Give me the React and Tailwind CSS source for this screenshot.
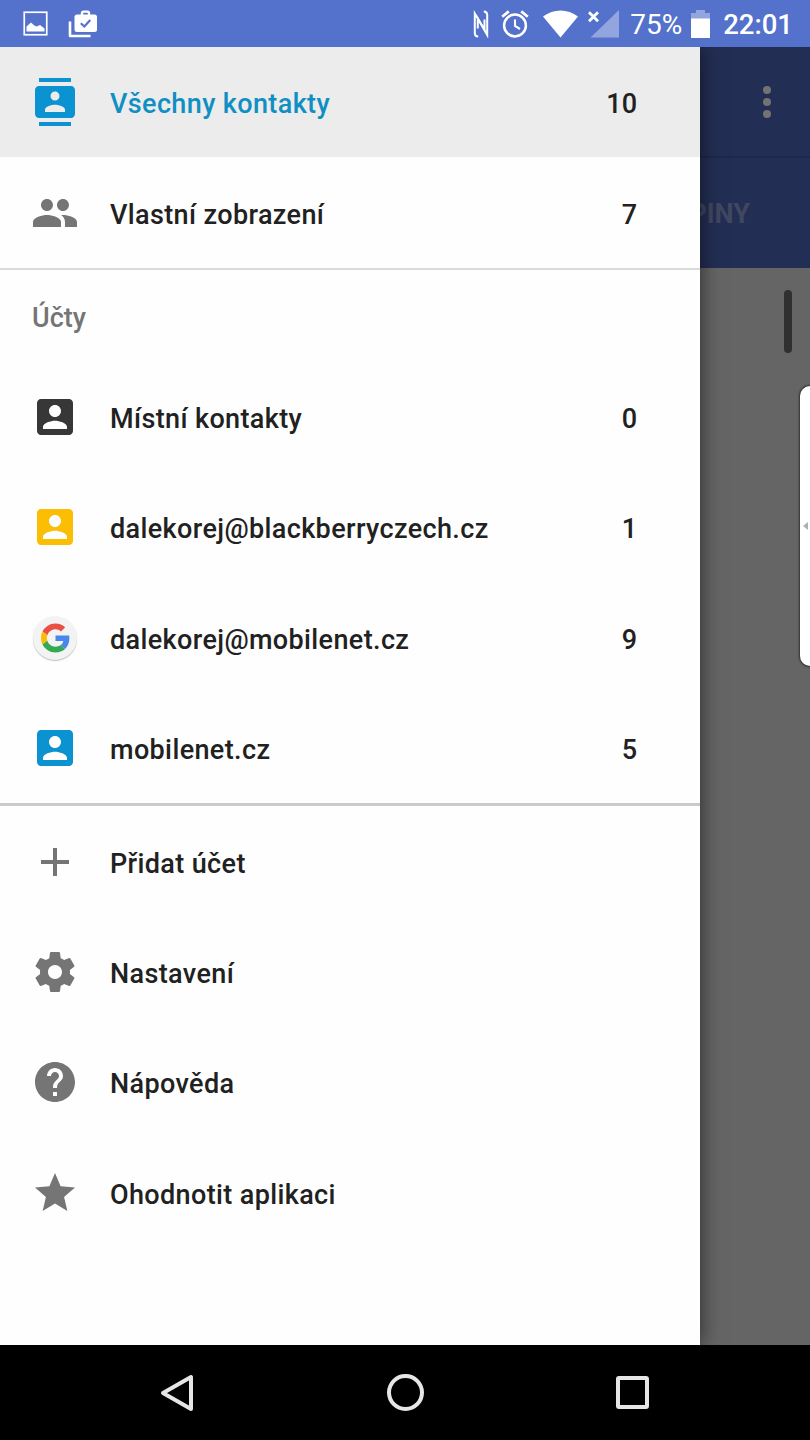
import { MdAdd, MdHelp, MdStar } from "react-icons/md";

// Material icons on a 24 unit grid
const ContactsIcon = () => (
  <svg className="w-12 h-12" viewBox="0 0 24 24" fill="currentColor">
    <path d="M20 0H4v2h16V0zM4 24h16v-2H4v2zM20 4H4c-1.1 0-2 .9-2 2v12c0 1.1.9 2 2 2h16c1.1 0 2-.9 2-2V6c0-1.1-.9-2-2-2zm-8 2.75c1.24 0 2.25 1.01 2.25 2.25s-1.01 2.25-2.25 2.25S9.75 10.24 9.75 9 10.76 6.75 12 6.75zM17 17H7v-1.1c0-1.67 3.33-2.5 5-2.5s5 .83 5 2.5V17z" />
  </svg>
);

const PeopleIcon = () => (
  <svg className="w-12 h-12" viewBox="0 0 24 24" fill="currentColor">
    <path d="M16 11c1.66 0 2.99-1.34 2.99-3S17.66 5 16 5c-1.66 0-3 1.34-3 3s1.34 3 3 3zm-8 0c1.66 0 2.99-1.34 2.99-3S9.66 5 8 5C6.34 5 5 6.34 5 8s1.34 3 3 3zm0 2c-2.33 0-7 1.17-7 3.5V19h14v-2.5c0-2.33-4.67-3.5-7-3.5zm8 0c-.29 0-.62.02-.97.05 1.16.84 1.97 1.97 1.97 3.45V19h6v-2.5c0-2.33-4.67-3.5-7-3.5z" />
  </svg>
);

const AccountIcon = () => (
  <svg className="w-12 h-12" viewBox="0 0 24 24" fill="currentColor">
    <path d="M3 5v14c0 1.1.9 2 2 2h14c1.1 0 2-.9 2-2V5c0-1.1-.9-2-2-2H5c-1.1 0-2 .9-2 2zm12 4c0 1.66-1.34 3-3 3s-3-1.34-3-3 1.34-3 3-3 3 1.34 3 3zm-9 8c0-2 4-3.1 6-3.1s6 1.1 6 3.1v1H6v-1z" />
  </svg>
);

const SettingsIcon = () => (
  <svg className="w-12 h-12" viewBox="0 0 24 24" fill="currentColor">
    <path d="M19.43 12.98c.04-.32.07-.64.07-.98s-.03-.66-.07-.98l2.11-1.65c.19-.15.24-.42.12-.64l-2-3.46c-.12-.22-.39-.3-.61-.22l-2.49 1c-.52-.4-1.08-.73-1.69-.98l-.38-2.65C14.46 2.18 14.25 2 14 2h-4c-.25 0-.46.18-.49.42l-.38 2.65c-.61.25-1.17.59-1.69.98l-2.49-1c-.23-.09-.49 0-.61.22l-2 3.46c-.13.22-.07.49.12.64l2.11 1.65c-.04.32-.07.65-.07.98s.03.66.07.98l-2.11 1.65c-.19.15-.24.42-.12.64l2 3.46c.12.22.39.3.61.22l2.49-1c.52.4 1.08.73 1.69.98l.38 2.65c.03.24.24.42.49.42h4c.25 0 .46-.18.49-.42l.38-2.65c.61-.25 1.17-.59 1.69-.98l2.49 1c.23.09.49 0 .61-.22l2-3.46c.12-.22.07-.49-.12-.64l-2.11-1.65zM12 15.5c-1.93 0-3.5-1.57-3.5-3.5s1.57-3.5 3.5-3.5 3.5 1.57 3.5 3.5-1.57 3.5-3.5 3.5z" />
  </svg>
);

const GoogleIcon = () => (
  <div className="w-11 h-11 rounded-full bg-[#f3f3f3] shadow-[0_1px_1px_rgba(0,0,0,0.25)] flex items-center justify-center">
    <svg className="w-[29px] h-[30px]" viewBox="0 0 48 48">
      <path fill="#e94f42" d="M24 9.5c3.54 0 6.71 1.22 9.21 3.6l6.85-6.85C35.9 2.38 30.47 0 24 0 14.62 0 6.51 5.38 2.56 13.22l7.98 6.19C12.43 13.72 17.74 9.5 24 9.5z" />
      <path fill="#4a87ea" d="M46.98 24.55c0-1.57-.15-3.09-.38-4.55H24v9.02h12.94c-.58 2.96-2.26 5.48-4.78 7.18l7.73 6c4.51-4.18 7.09-10.36 7.09-17.65z" />
      <path fill="#fbbc05" d="M10.53 28.59c-.48-1.45-.76-2.99-.76-4.59s.27-3.14.76-4.59l-7.98-6.19C.92 16.46 0 20.12 0 24c0 3.88.92 7.54 2.56 10.78l7.97-6.19z" />
      <path fill="#34a853" d="M24 48c6.48 0 11.93-2.13 15.89-5.81l-7.73-6c-2.15 1.45-4.92 2.3-8.16 2.3-6.26 0-11.57-4.22-13.47-9.91l-7.98 6.19C6.51 42.62 14.62 48 24 48z" />
    </svg>
  </div>
);

// Status Bar Component
const StatusBar = () => {
  return (
    <header className="h-[47px] shrink-0 bg-[#5472cb] text-white flex items-center justify-between pl-[23px] pr-[17px]">
      <div className="flex items-center">
        <svg className="w-[25px] h-[25px]" viewBox="0 0 25 25">
          <rect x="1.250" y="1.250" width="22.500" height="22.500" fill="none" stroke="white" strokeWidth="1.700" />
          <path fill="white" d="M3.500 20.500v-5l4.500-4 3 2.700 2.500 1.300 3.500-1.500 4.500 3.500v3z" />
        </svg>
        <svg className="w-[29px] h-[28px] ml-5" viewBox="0 0 29 28">
          <path fill="none" stroke="white" strokeWidth="2.600" strokeLinejoin="round" d="M2 11.500V26h20.500" />
          <path fill="none" stroke="white" strokeWidth="2.400" d="M14 5V3.200Q14 1.600 15.500 1.600h4Q21 1.600 21 3.200V5" />
          <rect x="6.500" y="4.500" width="22.500" height="17.500" rx="2.500" fill="white" />
          <path fill="none" stroke="#5472cb" strokeWidth="2.200" d="M12.800 13.200l3.500 3.300 6-6.500" />
        </svg>
      </div>
      <div className="flex items-center">
        <svg className="w-4 h-7" viewBox="0 0 16 28" fill="none" stroke="white" strokeWidth="2">
          <path d="M5.200 26.500Q1.800 26.500 1.800 23V3.500L11.500 19.500V9.500" />
          <path d="M10.800 1.500Q14.200 1.500 14.200 5v20L4.800 8.500v10" />
        </svg>
        <svg className="w-7 h-7 ml-3" viewBox="0 0 28 28" fill="none" stroke="white">
          <circle cx="14" cy="15.500" r="10.900" strokeWidth="2.500" />
          <path strokeWidth="2.700" d="M1.200 6.800L7.800 1.400M26.800 6.800L20.200 1.400" />
          <path strokeWidth="2.100" d="M14 9.500v6.500l5 3" />
        </svg>
        <svg className="w-[35px] h-[28px] ml-[14px]" viewBox="0 0 35 28">
          <path fill="white" d="M0 6.500Q8 .5 17.500 .5T35 6.500L17.500 27.500z" />
        </svg>
        <svg className="w-8 h-[28px] ml-[10px]" viewBox="0 0 32 28">
          <path fill="#93a5de" d="M31 0v27.500H2.500z" />
          <path stroke="white" strokeWidth="2.800" d="M1 2.200l9 9M10 2.200l-9 9" />
        </svg>
        <span className="ml-[10px] w-[52px] text-[28px] leading-none pt-[3px]">75%</span>
        <svg className="w-[19px] h-7 ml-[9px]" viewBox="0 0 19 28">
          <path fill="#93a5de" d="M5 0h9v3h5v6H0V3h5z" />
          <path fill="white" d="M0 8.500h19V28H0z" />
        </svg>
        <span className="ml-[13px] text-[27.500px] font-medium leading-none pt-[3px]">22:01</span>
      </div>
    </header>
  );
};

// Drawer Item Component
const DrawerItem = ({ icon, iconColor, label, count, active }) => {
  return (
    <li
      className={`h-[110.400px] flex items-center pr-[63px] font-medium ${
        active ? "bg-[#ececec]" : ""
      }`}
    >
      <span className={`w-[110px] flex justify-center ${iconColor}`}>{icon}</span>
      <span className={`grow pt-1 tracking-[0.370px] ${active ? "text-[#108fc3]" : ""}`}>{label}</span>
      <span className="pt-1">{count}</span>
    </li>
  );
};

const views = [
  { icon: <ContactsIcon />, iconColor: "text-[#0a93d0]", label: "Všechny kontakty", count: 10, active: true },
  { icon: <PeopleIcon />, iconColor: "text-[#757575]", label: "Vlastní zobrazení", count: 7 },
];

const accounts = [
  { icon: <AccountIcon />, iconColor: "text-[#373737]", label: "Místní kontakty", count: 0 },
  { icon: <AccountIcon />, iconColor: "text-[#fcbd05]", label: "dalekorej@blackberryczech.cz", count: 1 },
  { icon: <GoogleIcon />, iconColor: "", label: "dalekorej@mobilenet.cz", count: 9 },
  { icon: <AccountIcon />, iconColor: "text-[#0a93d0]", label: "mobilenet.cz", count: 5 },
];

const actions = [
  { icon: <MdAdd size={48} />, iconColor: "text-[#757575]", label: "Přidat účet" },
  { icon: <SettingsIcon />, iconColor: "text-[#757575]", label: "Nastavení" },
  { icon: <MdHelp size={48} />, iconColor: "text-[#757575]", label: "Nápověda" },
  { icon: <MdStar size={48} />, iconColor: "text-[#757575]", label: "Ohodnotit aplikaci" },
];

// Navigation Drawer Component
const Drawer = () => {
  return (
    <nav className="w-[700px] shrink-0 z-10 bg-[#fefefe] text-[#212121] text-[27px] leading-8 shadow-[0_0_20px_rgba(0,0,0,0.6)]">
      <ul className="border-b-2 border-[#dadada]">
        {views.map((item) => (
          <DrawerItem key={item.label} {...item} />
        ))}
      </ul>
      <h2 className="h-[92px] flex items-center pl-8 pt-1 font-medium text-[#757575]">Účty</h2>
      <ul className="border-b-3 border-[#cacaca]">
        {accounts.map((item) => (
          <DrawerItem key={item.label} {...item} />
        ))}
      </ul>
      <ul>
        {actions.map((item) => (
          <DrawerItem key={item.label} {...item} />
        ))}
      </ul>
    </nav>
  );
};

// Dimmed contact list left visible beside the drawer
const DimmedPage = () => {
  return (
    <div className="grow min-w-0 flex flex-col bg-[#656565] overflow-hidden">
      <div className="h-[111px] bg-[#232e54] border-b-2 border-[#1e2849] flex flex-col items-end justify-center gap-1 pr-[39px] pt-px">
        <span className="w-2 h-2 rounded-full bg-[#737373]" />
        <span className="w-2 h-2 rounded-full bg-[#737373]" />
        <span className="w-2 h-2 rounded-full bg-[#737373]" />
      </div>
      <div className="h-[110px] bg-[#232e54] flex items-center justify-end pr-[60px] pt-[3px] text-[27px] font-bold text-[#40475f]">
        SKUPINY
      </div>
      <div className="flex justify-end pr-[18px] pt-[22px]">
        <span className="w-2 h-[63px] rounded-full bg-[#303030]" />
      </div>
    </div>
  );
};

const EdgeHandle = () => {
  return (
    <div className="absolute z-20 right-0 top-[386px] w-[10px] h-[280px] rounded-l-[10px] bg-white shadow-[0_0_2px_1px_rgba(0,0,0,0.5)] flex items-center justify-center">
      <svg className="w-[5px] h-2" viewBox="0 0 5 8">
        <path fill="#b0b0b0" d="M5 0v8L0 4z" />
      </svg>
    </div>
  );
};

// Android Navigation Bar Component
const NavigationBar = () => {
  return (
    <footer className="h-[95px] shrink-0 z-20 bg-black flex items-center justify-between pl-[159px] pr-[161px]">
      <svg className="w-[35px] h-[38px]" viewBox="-1 0 35 38">
        <path fill="none" stroke="#e6e6e6" strokeWidth="4" strokeLinejoin="round" d="M31 3v32L3 19z" />
      </svg>
      <span className="w-[37px] h-[37px] rounded-full border-4 border-[#e6e6e6]" />
      <span className="w-[33px] h-[33px] rounded-[3px] border-4 border-[#e6e6e6]" />
    </footer>
  );
};

const App = () => {
  return (
    <div className="relative w-[810px] h-[1440px] flex flex-col overflow-hidden bg-black font-['Roboto',sans-serif]">
      <StatusBar />
      <main className="grow min-h-0 flex overflow-hidden">
        <Drawer />
        <DimmedPage />
      </main>
      <NavigationBar />
      <EdgeHandle />
    </div>
  );
};

export default App;
